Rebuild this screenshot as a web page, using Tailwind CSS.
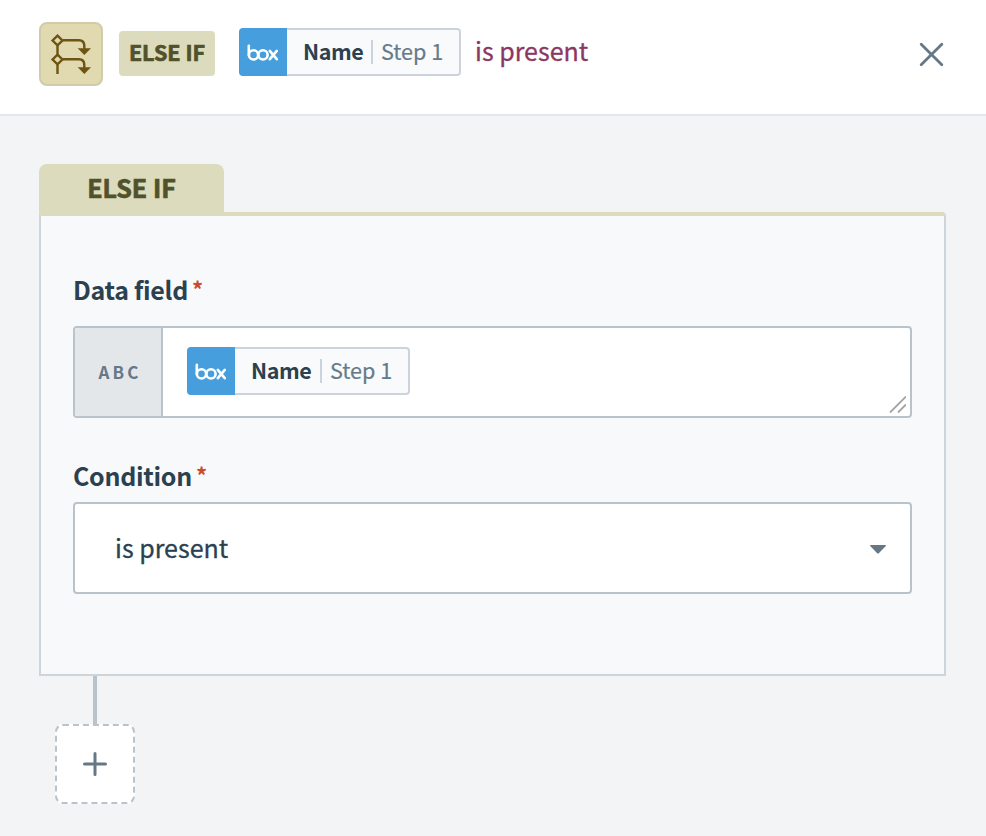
<!DOCTYPE html>
<html lang="en">
<head>
  <meta charset="UTF-8" />
  <meta name="viewport" content="width=device-width, initial-scale=1" />
  <title>Else if condition</title>
  <script src="https://cdn.jsdelivr.net/npm/@tailwindcss/browser@4"></script>
</head>
<body class="flex h-screen flex-col overflow-hidden bg-[#f3f4f6] font-['Noto_Sans_CJK_SC',sans-serif] text-[#2b414f]">

  <!-- Header -->
  <header class="flex h-[116px] shrink-0 items-start border-b-2 border-[#e2e7eb] bg-white pt-[22px] pr-10 pl-[39px]">
    <div class="h-16 w-16 shrink-0 rounded-lg border-2 border-[#d0cba9] bg-[#e1d9af]">
      <svg class="h-[60px] w-[60px]" viewBox="0 0 60 60" fill="none" stroke="#6e5413" stroke-width="2.4">
        <path d="M16.5 11.6 21.4 16.5 16.5 21.4 11.6 16.5Z M16.5 30.6 21.4 35.5 16.5 40.4 11.6 35.5Z" />
        <path d="M16.5 21.5V30.5M16.5 40.5V50M21.5 16.3H38Q43.3 16.3 43.3 22V25M21.5 35.3H38Q43.3 35.3 43.3 41V44" />
        <path d="M36.7 24.3H50L43.3 31ZM36.7 43.3H50L43.3 50Z" fill="#6e5413" stroke="none" />
      </svg>
    </div>
    <div class="mt-[9px] ml-4 h-[45px] w-24 shrink-0 rounded bg-[#dcdbbd] text-center text-[21.5px] leading-[42px] font-bold text-[#51522b] [-webkit-text-stroke:0.7px_#51522b]">ELSE IF</div>
    <div class="mt-1.5 ml-6 flex h-12 w-[222px] shrink-0">
      <svg class="h-12 w-12 shrink-0 rounded-l" viewBox="0 0 48 48" fill="none">
        <path fill="#469fdc" d="M0 0H48V48H0Z" />
        <g stroke="#fff" stroke-width="2.6" stroke-linecap="round">
          <path d="M9.8 17.8V27" />
          <circle cx="14.5" cy="26.9" r="4.6" />
          <circle cx="24" cy="26.9" r="4.6" />
          <path d="M30.8 22.9 37.8 31.2M37.8 22.9 30.8 31.2" />
        </g>
      </svg>
      <div class="flex flex-1 items-center rounded-r border-2 border-l-0 border-[#cdd3da] bg-[#f9fafc] pl-4 text-[22px] leading-[44px]">
        <span class="-mt-[3px] w-[60px] text-[21.5px] font-bold tracking-[-0.4px]">Name</span>
        <span class="mx-2 h-6 w-0.5 shrink-0 bg-[#cdd3da]"></span>
        <span class="-mt-[3px] text-[21.6px] whitespace-nowrap text-[#667b8a] [-webkit-text-stroke:0.2px_#667b8a]">Step 1</span>
      </div>
    </div>
    <div class="mt-1 ml-[14px] text-[25px] leading-[48px] text-[#8b3762] [-webkit-text-stroke:0.3px_#8b3762]">is present</div>
    <svg class="mt-5 ml-auto mr-0.5 h-[25px] w-[25px]" viewBox="0 0 25 25" fill="none" stroke="#667785" stroke-width="2.8" stroke-linecap="round">
      <path d="M2.2 2.2 22.8 22.8M22.8 2.2 2.2 22.8" />
    </svg>
  </header>

  <main class="px-10 pt-12 pl-[39px]">
    <div class="h-12 w-[185px] rounded-t-lg bg-[#dcdbbd] text-center text-[25px] leading-[47px] font-bold text-[#51522b] [-webkit-text-stroke:0.7px_#51522b]">ELSE IF</div>

    <!-- Condition card -->
    <section class="h-[464px] rounded-tr border-2 border-t-4 border-[#cdd5db] border-t-[#dcdbbd] bg-[#f8f9fb] px-8 pt-[53px]">
      <div class="flex h-10 gap-1 text-[25px] leading-10 font-bold tracking-[-0.3px]">
        <span>Data field</span><span class="text-[22px] leading-[38px] text-[#cc4a2c]">*</span>
      </div>
      <div class="mt-[17px] flex h-[92px] rounded border-2 border-[#b8c3cb] bg-white">
        <div class="w-[88px] shrink-0 rounded-l-sm border-r-2 border-[#b8c3cb] bg-[#e3e7ea] pl-1 text-center text-[17px] leading-[87px] font-bold tracking-[3.2px] text-[#667785]">ABC</div>
        <div class="mt-[19px] ml-6 flex h-12 w-[223px]">
          <svg class="h-12 w-12 shrink-0 rounded-l" viewBox="0 0 48 48" fill="none">
            <path fill="#469fdc" d="M0 0H48V48H0Z" />
            <g stroke="#fff" stroke-width="2.6" stroke-linecap="round">
              <path d="M9.8 17.8V27" />
              <circle cx="14.5" cy="26.9" r="4.6" />
              <circle cx="24" cy="26.9" r="4.6" />
              <path d="M30.8 22.9 37.8 31.2M37.8 22.9 30.8 31.2" />
            </g>
          </svg>
          <div class="flex flex-1 items-center rounded-r border-2 border-l-0 border-[#cdd3da] bg-[#f9fafc] pl-4 text-[22px] leading-[44px]">
            <span class="-mt-[3px] w-[61px] text-[21.5px] font-bold tracking-[-0.4px]">Name</span>
            <span class="mx-2 h-6 w-0.5 shrink-0 bg-[#cdd3da]"></span>
            <span class="-mt-[3px] text-[21.6px] whitespace-nowrap text-[#667b8a] [-webkit-text-stroke:0.2px_#667b8a]">Step 1</span>
          </div>
        </div>
        <svg class="mr-1 mb-[3px] ml-auto h-[17px] w-[17px] self-end" viewBox="0 0 17 17" fill="none" stroke="#a3a3a3" stroke-width="1.8">
          <path d="M1 16.5 17 .5M9 16.5 17 8.5" />
        </svg>
      </div>

      <div class="mt-[37px] flex h-10 gap-1 text-[25px] leading-10 font-bold tracking-[-0.3px]">
        <span>Condition</span><span class="text-[22px] leading-[38px] text-[#cc4a2c]">*</span>
      </div>
      <div class="mt-[7px] flex h-[92px] items-center justify-between rounded border-2 border-[#b8c3cb] bg-white pr-6 pl-10 text-[25px]">
        <span class="[-webkit-text-stroke:0.3px_#2b414f]">is present</span>
        <svg class="mt-0.5 h-[9px] w-4" viewBox="0 0 16 9" fill="#667785"><path d="M.5 0H15.5Q16.3.6 15.6 1.3L8.8 8.3Q8 9 7.2 8.3L.4 1.3Q-.3.6.5 0Z" /></svg>
      </div>
    </section>

    <!-- Add step -->
    <div class="ml-4 flex w-20 flex-col items-center">
      <div class="h-12 w-1 bg-[#b8c3cb]"></div>
      <div class="flex h-20 w-20 items-center justify-center rounded-lg border-2 border-dashed border-[#b8c3cb] bg-white">
        <svg class="h-6 w-6" viewBox="0 0 24 24" fill="none" stroke="#667785" stroke-width="3" stroke-linecap="round"><path d="M12 1.5V22.5M1.5 12H22.5" /></svg>
      </div>
    </div>
  </main>

</body>
</html>
